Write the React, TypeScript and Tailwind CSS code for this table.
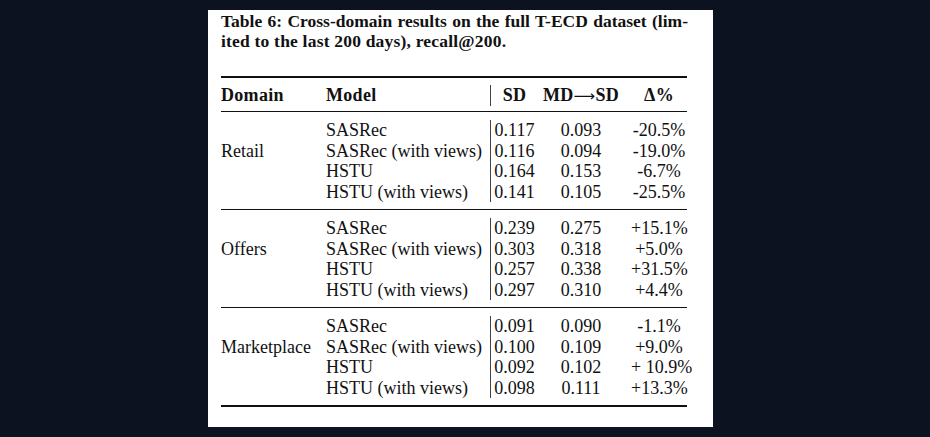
import React from 'react';

type Group = {
    domain: string;
    rows: string[][];
};

const groups: Group[] = [
    {
        domain: 'Retail',
        rows: [
            ['SASRec', '0.117', '0.093', '-20.5%'],
            ['SASRec (with views)', '0.116', '0.094', '-19.0%'],
            ['HSTU', '0.164', '0.153', '-6.7%'],
            ['HSTU (with views)', '0.141', '0.105', '-25.5%'],
        ],
    },
    {
        domain: 'Offers',
        rows: [
            ['SASRec', '0.239', '0.275', '+15.1%'],
            ['SASRec (with views)', '0.303', '0.318', '+5.0%'],
            ['HSTU', '0.257', '0.338', '+31.5%'],
            ['HSTU (with views)', '0.297', '0.310', '+4.4%'],
        ],
    },
    {
        domain: 'Marketplace',
        rows: [
            ['SASRec', '0.091', '0.090', '-1.1%'],
            ['SASRec (with views)', '0.100', '0.109', '+9.0%'],
            ['HSTU', '0.092', '0.102', '+ 10.9%'],
            ['HSTU (with views)', '0.098', '0.111', '+13.3%'],
        ],
    },
];

const cols = 'grid grid-cols-[105px_164px_48px_86px_63px]';

export default function App() {
    return (
        <div className="w-full h-[437px] bg-[#0d1220] pl-[208px] pt-[10px] overflow-hidden">
            <div className="w-[505px] h-[417px] bg-white pl-[13px] pt-[1px] text-[#111] font-['Liberation_Serif','DejaVu_Serif',serif]">
                {/* caption */}
                <div className="w-[467px] font-bold text-[17.5px] leading-[20px]">
                    <div className="text-justify [text-align-last:justify]">
                        Table 6: Cross-domain results on the full T-ECD dataset (lim-
                    </div>
                    <div className="tracking-[0.2px]">ited to the last 200 days), recall@200.</div>
                </div>

                <div className="w-[466px] mt-[25px] border-t-2 border-[#111] text-[18px] leading-[20.5px]">
                    {/* header */}
                    <div className={`${cols} pt-[7px] pb-[5px] border-b border-[#111] font-bold leading-[20px] tracking-[0.3px]`}>
                        <div>Domain</div>
                        <div>Model</div>
                        <div className="border-l border-[#444] text-center">SD</div>
                        <div className="text-center whitespace-nowrap">
                            MD<span className="font-['DejaVu_Sans',sans-serif] font-normal text-[15px]">⟶</span>SD
                        </div>
                        <div className="text-center pl-[7px]">Δ%</div>
                    </div>

                    {groups.map((g, gi) => (
                        <div
                            key={g.domain}
                            className={`${cols} pt-[8px] pb-[7px] border-[#111] ${gi === groups.length - 1 ? 'border-b-2' : 'border-b'}`}
                        >
                            {g.rows.map((r, i) => (
                                <React.Fragment key={i}>
                                    <div>{i === 1 ? g.domain : ''}</div>
                                    <div className="whitespace-nowrap">{r[0]}</div>
                                    <div className="border-l border-[#444] text-center">{r[1]}</div>
                                    <div className="text-center">{r[2]}</div>
                                    <div className="text-center pl-[7px] whitespace-nowrap">{r[3]}</div>
                                </React.Fragment>
                            ))}
                        </div>
                    ))}
                </div>
            </div>
        </div>
    );
}
